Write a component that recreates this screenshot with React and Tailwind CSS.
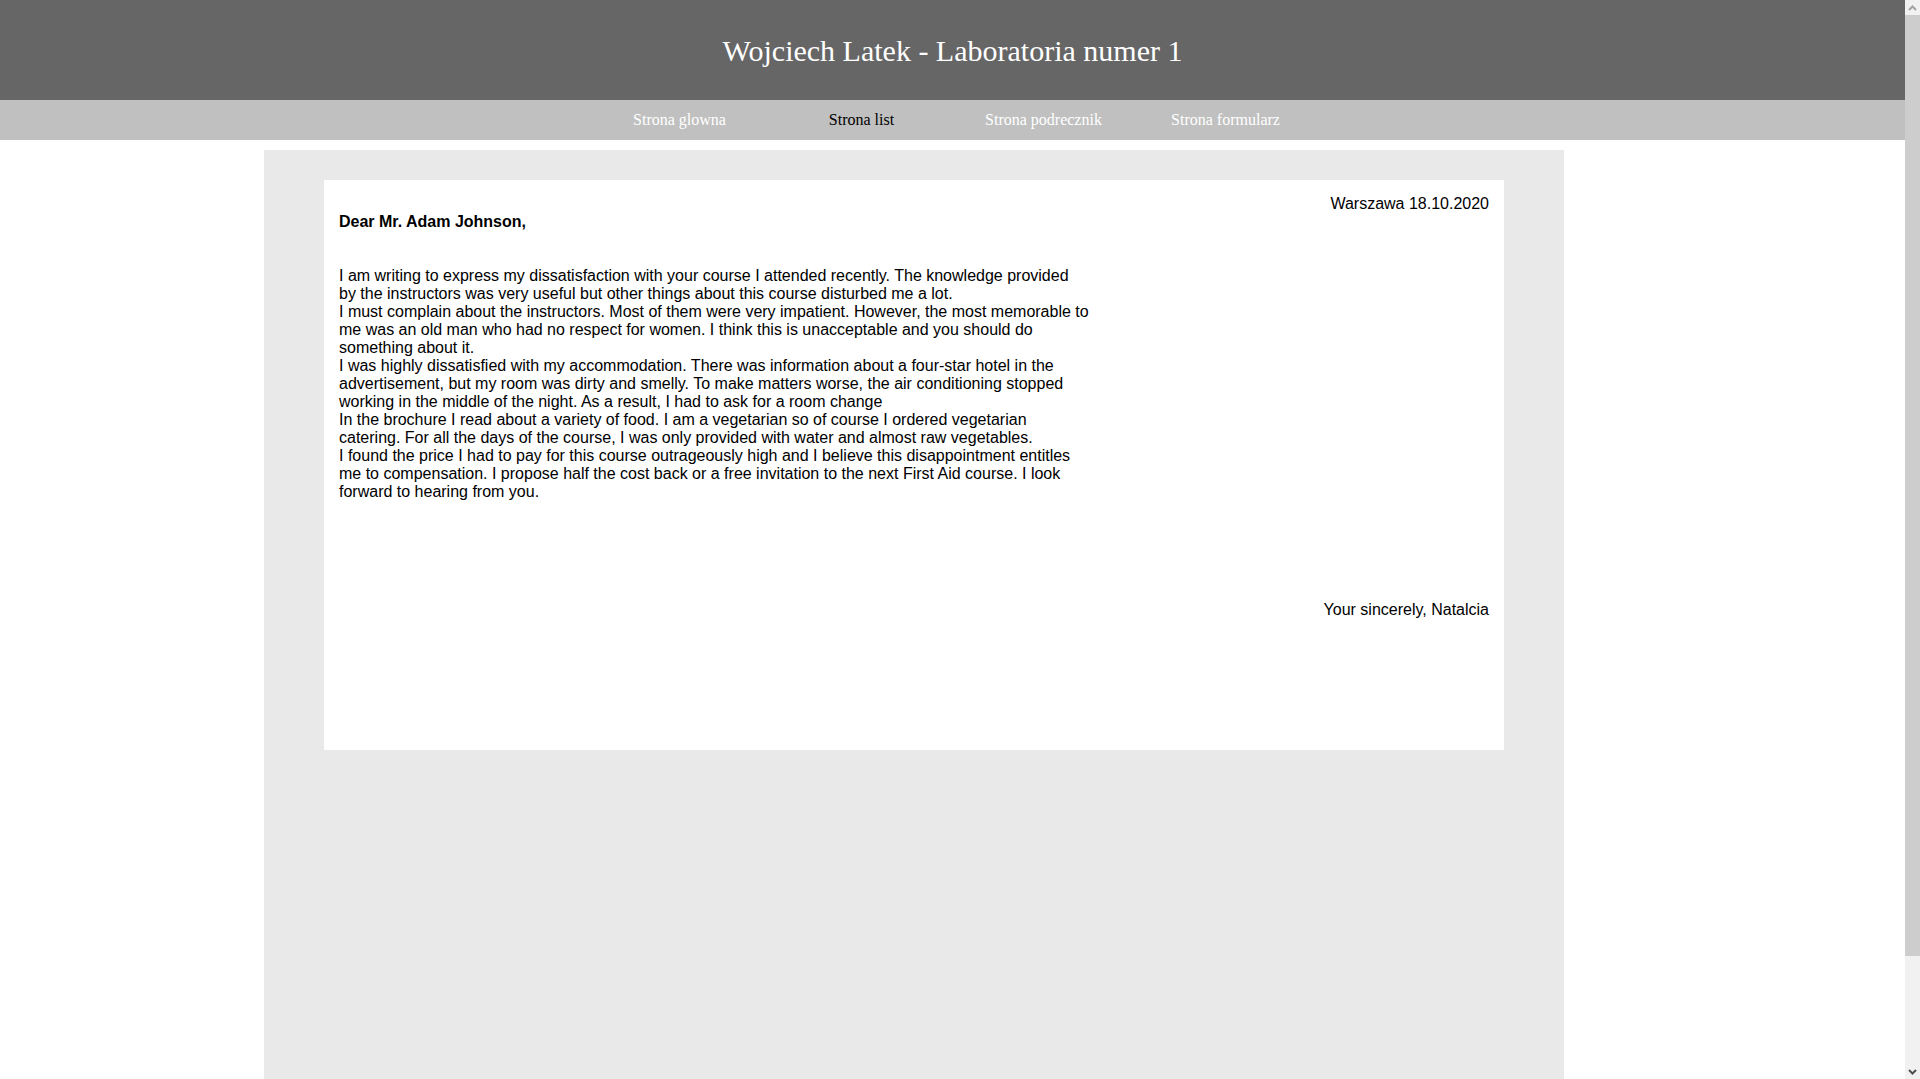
import React from 'react';

const links = [
    { label: 'Strona glowna', active: false },
    { label: 'Strona list', active: true },
    { label: 'Strona podrecznik', active: false },
    { label: 'Strona formularz', active: false },
];

// each line kept as in the original page so the wrapping matches
const lines = [
    'I am writing to express my dissatisfaction with your course I attended recently. The knowledge provided',
    'by the instructors was very useful but other things about this course disturbed me a lot.',
    'I must complain about the instructors. Most of them were very impatient. However, the most memorable to',
    'me was an old man who had no respect for women. I think this is unacceptable and you should do',
    'something about it.',
    'I was highly dissatisfied with my accommodation. There was information about a four-star hotel in the',
    'advertisement, but my room was dirty and smelly. To make matters worse, the air conditioning stopped',
    'working in the middle of the night. As a result, I had to ask for a room change',
    'In the brochure I read about a variety of food. I am a vegetarian so of course I ordered vegetarian',
    'catering. For all the days of the course, I was only provided with water and almost raw vegetables.',
    'I found the price I had to pay for this course outrageously high and I believe this disappointment entitles',
    'me to compensation. I propose half the cost back or a free invitation to the next First Aid course. I look',
    'forward to hearing from you.',
];

function Scrollbar() {
    return (
        <div className="fixed top-0 right-0 w-[15px] h-screen bg-[#f1f1f1] flex flex-col">
            <div className="h-[15px] flex items-center justify-center">
                <svg width="9" height="6" viewBox="0 0 9 6"><path d="M1 5 L4.5 1.5 L8 5" stroke="#a3a3a3" strokeWidth="2" fill="none" /></svg>
            </div>
            <div className="h-[941px] bg-[#cdcdcd]" />
            <div className="flex-1" />
            <div className="h-[15px] flex items-center justify-center">
                <svg width="9" height="6" viewBox="0 0 9 6"><path d="M1 1 L4.5 4.5 L8 1" stroke="#505050" strokeWidth="2" fill="none" /></svg>
            </div>
        </div>
    );
}

export default function App() {
    return (
        <div className="min-h-screen bg-white">
            <div className="mr-[15px]">
                <header className="h-[100px] bg-[#666666] flex items-center justify-center">
                    <h1 className="text-[30px] text-white font-normal" style={{ fontFamily: '"Liberation Serif", "Times New Roman", serif' }}>
                        Wojciech Latek - Laboratoria numer 1
                    </h1>
                </header>

                <nav className="h-[40px] bg-[#c0c0c0] flex items-center justify-center" style={{ fontFamily: '"Liberation Serif", "Times New Roman", serif' }}>
                    {links.map(l => (
                        <a key={l.label} className={`w-[182px] text-center text-[16px] ${l.active ? 'text-black' : 'text-white'}`}>
                            {l.label}
                        </a>
                    ))}
                </nav>

                <main className="mt-[10px] ml-[264px] w-[1300px] h-[1053px] bg-[#e9e9e9] pt-[30px] px-[60px]">
                    <div className="h-[570px] bg-white px-[15px] pt-[15px] text-[16px] leading-[18px] text-black" style={{ fontFamily: '"Liberation Sans", Arial, sans-serif' }}>
                        <div className="text-right">Warszawa 18.10.2020</div>
                        <div className="font-bold">Dear Mr. Adam Johnson,</div>

                        <div className="mt-[36px]">
                            {lines.map((line, i) => (
                                <div key={i} className="whitespace-nowrap">{line}</div>
                            ))}
                        </div>

                        <div className="mt-[100px] text-right">Your sincerely, Natalcia</div>
                    </div>
                </main>
            </div>
            <Scrollbar />
        </div>
    );
}
